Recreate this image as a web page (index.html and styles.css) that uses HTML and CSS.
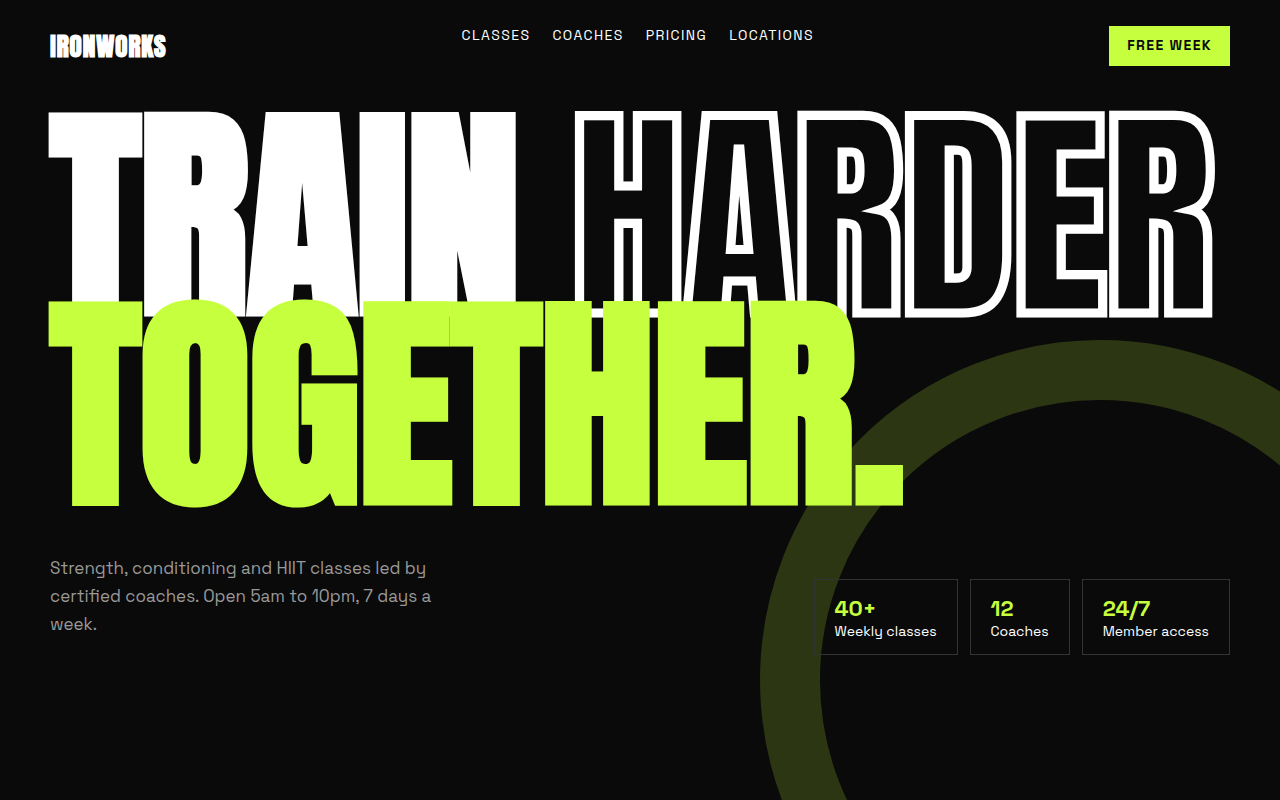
FILE: index.html
```html
<!DOCTYPE html>
<html lang="en">
<head>
    <meta charset="UTF-8">
    <meta name="viewport" content="width=device-width, initial-scale=1.0">
    <title>Ironworks</title>
    <link rel="stylesheet" href="styles.css">
</head>
<body>
    <section class="hero">
        <div class="ring"></div>
        <header class="topbar">
            <a class="logo" href="#">IRONWORKS</a>
            <nav class="links">
                <a href="#">Classes</a>
                <a href="#">Coaches</a>
                <a href="#">Pricing</a>
                <a href="#">Locations</a>
            </nav>
            <button class="cta" type="button">Free week</button>
        </header>

        <h1 class="headline">
            <span class="line">Train <span class="outline">Harder</span></span>
            <span class="line accent">Together.</span>
        </h1>

        <div class="bottom">
            <p class="intro">Strength, conditioning and HIIT classes led by certified coaches. Open 5am to 10pm, 7 days a week.</p>
            <ul class="stats">
                <li class="stat"><b>40+</b>Weekly classes</li>
                <li class="stat"><b>12</b>Coaches</li>
                <li class="stat"><b>24/7</b>Member access</li>
            </ul>
        </div>
    </section>
</body>
</html>
```
FILE: styles.css
```css
* {
    margin: 0;
    padding: 0;
    box-sizing: border-box;
}

body {
    font-family: "Space Grotesk", Inter, sans-serif;
    background: #0a0a0a;
    color: #fff;
}

.hero {
    position: relative;
    min-height: 100vh;
    padding: 26px 50px;
    overflow: hidden;
}

.ring {
    position: absolute;
    right: -160px;
    bottom: -220px;
    width: 680px;
    height: 680px;
    border: 60px solid #c6ff3d;
    border-radius: 50%;
    opacity: 0.18;
}

.topbar {
    position: relative;
    display: flex;
    justify-content: space-between;
}

.logo {
    font-family: Anton, Impact, sans-serif;
    font-size: 26px;
    line-height: 40px;
    font-weight: 900;
    letter-spacing: 0.02em;
    color: #fff;
    text-decoration: none;
}

.links {
    display: flex;
    gap: 22px;
}

.links a {
    font-size: 14px;
    line-height: 18px;
    letter-spacing: 0.1em;
    text-transform: uppercase;
    color: #fff;
    text-decoration: none;
}

.cta {
    padding: 10px 18px 12px;
    border: none;
    background: #c6ff3d;
    color: #0a0a0a;
    font: inherit;
    font-size: 14px;
    line-height: 18px;
    font-weight: 700;
    letter-spacing: 0.1em;
    text-transform: uppercase;
    cursor: pointer;
}

.headline {
    position: relative;
    margin-top: 56px;
    font-family: Anton, Impact, sans-serif;
    font-size: clamp(64px, 18vw, 230px);
    line-height: 0.82;
    font-weight: 900;
    letter-spacing: -2px;
    text-transform: uppercase;
}

.line {
    display: block;
    white-space: nowrap;
}

.outline {
    color: transparent;
    -webkit-text-stroke: 2px #fff;
}

.accent {
    color: #c6ff3d;
}

.bottom {
    position: relative;
    display: flex;
    justify-content: space-between;
    align-items: flex-end;
    margin-top: 38px;
}

.intro {
    width: 390px;
    margin: 17px 0;
    font-size: 17px;
    line-height: 28px;
    color: #999;
}

.stats {
    display: flex;
    gap: 12px;
    list-style: none;
}

.stat {
    padding: 14px 20px;
    border: 1px solid #333;
    font-size: 14px;
    line-height: 18px;
}

.stat b {
    display: block;
    font-size: 22px;
    line-height: 28px;
    color: #c6ff3d;
}
```
